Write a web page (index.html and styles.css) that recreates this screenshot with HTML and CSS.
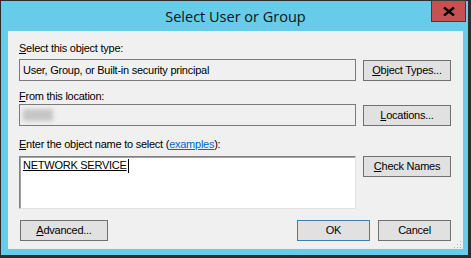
FILE: index.html
```html
<!DOCTYPE html>
<html>
<head>
<meta charset="utf-8">
<link rel="stylesheet" href="styles.css">
</head>
<body>
<div class="window">
  <div class="titlebar">Select User or Group</div>
  <button class="close" aria-label="Close">
    <svg width="12" height="9" viewBox="0 0 12 9"><path d="M1 0.5 L11 8.5 M11 0.5 L1 8.5" stroke="#000" stroke-width="2.4"/></svg>
  </button>
  <div class="client">
    <div class="label row-label1"><u>S</u>elect this object type:</div>
    <div class="field">User, Group, or Built-in security principal</div>
    <button class="btn"><u>O</u>bject Types...</button>

    <div class="label row-label2"><u>F</u>rom this location:</div>
    <div class="field"><span class="blur"></span></div>
    <button class="btn"><u>L</u>ocations...</button>

    <div class="label row-label3"><u>E</u>nter the object name to select (<a class="link">examples</a>):</div>
    <div class="textarea"><span class="name">NETWORK SERVICE</span><span class="caret"></span></div>
    <button class="btn btn-top"><u>C</u>heck Names</button>

    <div class="footer">
      <button class="btn btn-adv"><u>A</u>dvanced...</button>
      <div class="spacer"></div>
      <button class="btn btn-ok">OK</button>
      <button class="btn btn-cancel">Cancel</button>
    </div>
    <svg class="grip" width="9" height="9" viewBox="0 0 9 9">
      <g fill="#b4b4b4">
        <rect x="7" y="1" width="1" height="1"/>
        <rect x="4" y="4" width="1" height="1"/><rect x="7" y="4" width="1" height="1"/>
        <rect x="1" y="7" width="1" height="1"/><rect x="4" y="7" width="1" height="1"/><rect x="7" y="7" width="1" height="1"/>
      </g>
    </svg>
  </div>
</div>
</body>
</html>
```
FILE: styles.css
```css
html, body {
  margin: 0;
  padding: 0;
}
body {
  background: #2d2d2d;
  width: 471px;
  height: 258px;
  overflow: hidden;
  font-family: "Liberation Sans", Arial, sans-serif;
  font-size: 11px;
  letter-spacing: -0.25px;
  color: #000;
}
.window {
  position: relative;
  margin: 1px 0 0 1px;
  width: 467px;
  height: 254px;
  background: #67cbea;
  box-sizing: border-box;
  padding: 0 5px 6px 7px;
  display: flex;
  flex-direction: column;
}
.titlebar {
  height: 30px;
  flex: none;
  display: flex;
  align-items: center;
  justify-content: center;
  font-family: "Open Sans", "Noto Sans", sans-serif;
  font-size: 14.5px;
  letter-spacing: 0;
  color: #111;
  box-sizing: border-box;
}
.close {
  position: absolute;
  left: 430px;
  top: -1px;
  width: 35px;
  height: 22px;
  background: #c75050;
  border: 1px solid #3c3c3c;
  padding: 0;
  margin: 0;
  display: flex;
  align-items: center;
  justify-content: center;
}
.client {
  position: relative;
  flex: 1;
  background: #f0f0f0;
  box-sizing: border-box;
  padding: 11px 12px 0 11px;
  display: grid;
  grid-template-columns: 337px 88px;
  column-gap: 7px;
  align-content: start;
}
.label {
  grid-column: 1 / span 2;
  height: 13px;
  line-height: 13px;
  white-space: nowrap;
}
.row-label1 { margin-bottom: 4px; }
.row-label2 { margin-top: 9px; margin-bottom: 1px; }
.row-label3 { margin-top: 12px; margin-bottom: 5px; }
.link {
  color: #0066cc;
  text-decoration: underline;
}
.field {
  height: 22px;
  box-sizing: border-box;
  border: 1px solid #7a7a7a;
  background: #f0f0f0;
  padding: 3px 3px 0 3px;
  line-height: 14px;
  white-space: nowrap;
  overflow: hidden;
}
.blur {
  display: inline-block;
  width: 30px;
  height: 12px;
  margin-top: 1px;
  background: #c6c6c6;
  filter: blur(2px);
}
.btn {
  font-family: "Liberation Sans", Arial, sans-serif;
  font-size: 11px;
  letter-spacing: -0.25px;
  color: #000;
  height: 21px;
  margin: 1px 0 0 0;
  padding: 0;
  box-sizing: border-box;
  background: #e1e1e1;
  border: 1px solid #707070;
  border-radius: 0;
  line-height: 17px;
  text-align: center;
}
.btn-top { margin-top: 0; align-self: start; }
.textarea {
  height: 53px;
  box-sizing: border-box;
  background: #fff;
  border-style: solid;
  border-width: 1px;
  border-color: #828282 #e3e3e3 #e3e3e3 #828282;
  box-shadow: inset 1px 1px 0 #a0a0a0;
  padding: 2px 0 0 3px;
  line-height: 13px;
  display: flex;
  align-items: flex-start;
}
.name {
  text-decoration: underline;
  white-space: nowrap;
}
.caret {
  display: inline-block;
  width: 1px;
  height: 14px;
  background: #000;
  margin-left: 1px;
}
.footer {
  grid-column: 1 / span 2;
  display: flex;
  margin-top: 11px;
  padding-left: 1px;
}
.footer .btn { margin-top: 0; }
.btn-adv { width: 88px; }
.spacer { flex: 1; }
.btn-ok {
  width: 73px;
  border-color: #3c7fb1;
  margin-right: 8px;
}
.btn-cancel { width: 73px; }
.grip {
  position: absolute;
  right: 1px;
  bottom: 0;
}
```
